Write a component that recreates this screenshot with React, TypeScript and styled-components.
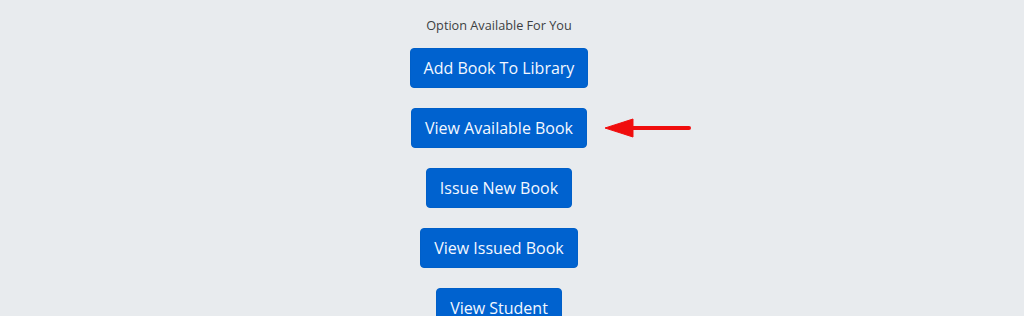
import React from 'react';
import styled, { createGlobalStyle } from 'styled-components';

const GlobalStyle = createGlobalStyle`
  html, body {
    margin: 0;
    padding: 0;
    background: #e8ebee;
  }
  body {
    font-family: 'Open Sans', 'Noto Sans', sans-serif;
  }
`;

const Page = styled.div`
  width: 998px;
  height: 316px;
  overflow: hidden;
  display: flex;
  flex-direction: column;
  align-items: center;
  padding-top: 16px;
  box-sizing: border-box;
`;

const Title = styled.p`
  margin: 0 0 14px;
  font-size: 12.7px;
  line-height: 18px;
  color: #3d3f42;
`;

const Options = styled.div`
  display: flex;
  flex-direction: column;
  align-items: center;
  gap: 20px;
`;

const Slot = styled.div`
  position: relative;
`;

const OptionButton = styled.button`
  display: block;
  height: 40px;
  padding: 0 13px;
  border: 1px solid #005fc8;
  border-radius: 4px;
  background: #0062cf;
  color: #f4f8ff;
  font-family: 'Open Sans', 'Noto Sans', sans-serif;
  font-size: 16px;
  white-space: nowrap;
  cursor: pointer;
`;

const Pointer = styled.svg`
  position: absolute;
  left: calc(100% + 16px);
  top: 50%;
  margin-top: -12.5px;
  overflow: visible;
`;

const RedArrow = () => (
  <Pointer width="90" height="24" viewBox="0 0 90 24">
    <defs>
      <filter id="soft" x="-10%" y="-40%" width="120%" height="180%">
        <feGaussianBlur stdDeviation="0.7" />
      </filter>
    </defs>
    <g filter="url(#soft)" fill="#f01010" stroke="#f01010">
      <line x1="28" y1="12" x2="86" y2="12" strokeWidth="4" strokeLinecap="round" />
      <polygon points="2,12 30,3 30,21" strokeWidth="1" strokeLinejoin="round" />
    </g>
  </Pointer>
);

const options = [
  'Add Book To Library',
  'View Available Book',
  'Issue New Book',
  'View Issued Book',
  'View Student',
];

export default function App() {
  return (
    <>
      <GlobalStyle />
      <Page>
        <Title>Option Available For You</Title>
        <Options>
          {options.map((label, i) => (
            <Slot key={label}>
              <OptionButton>{label}</OptionButton>
              {i === 1 && <RedArrow />}
            </Slot>
          ))}
        </Options>
      </Page>
    </>
  );
}
